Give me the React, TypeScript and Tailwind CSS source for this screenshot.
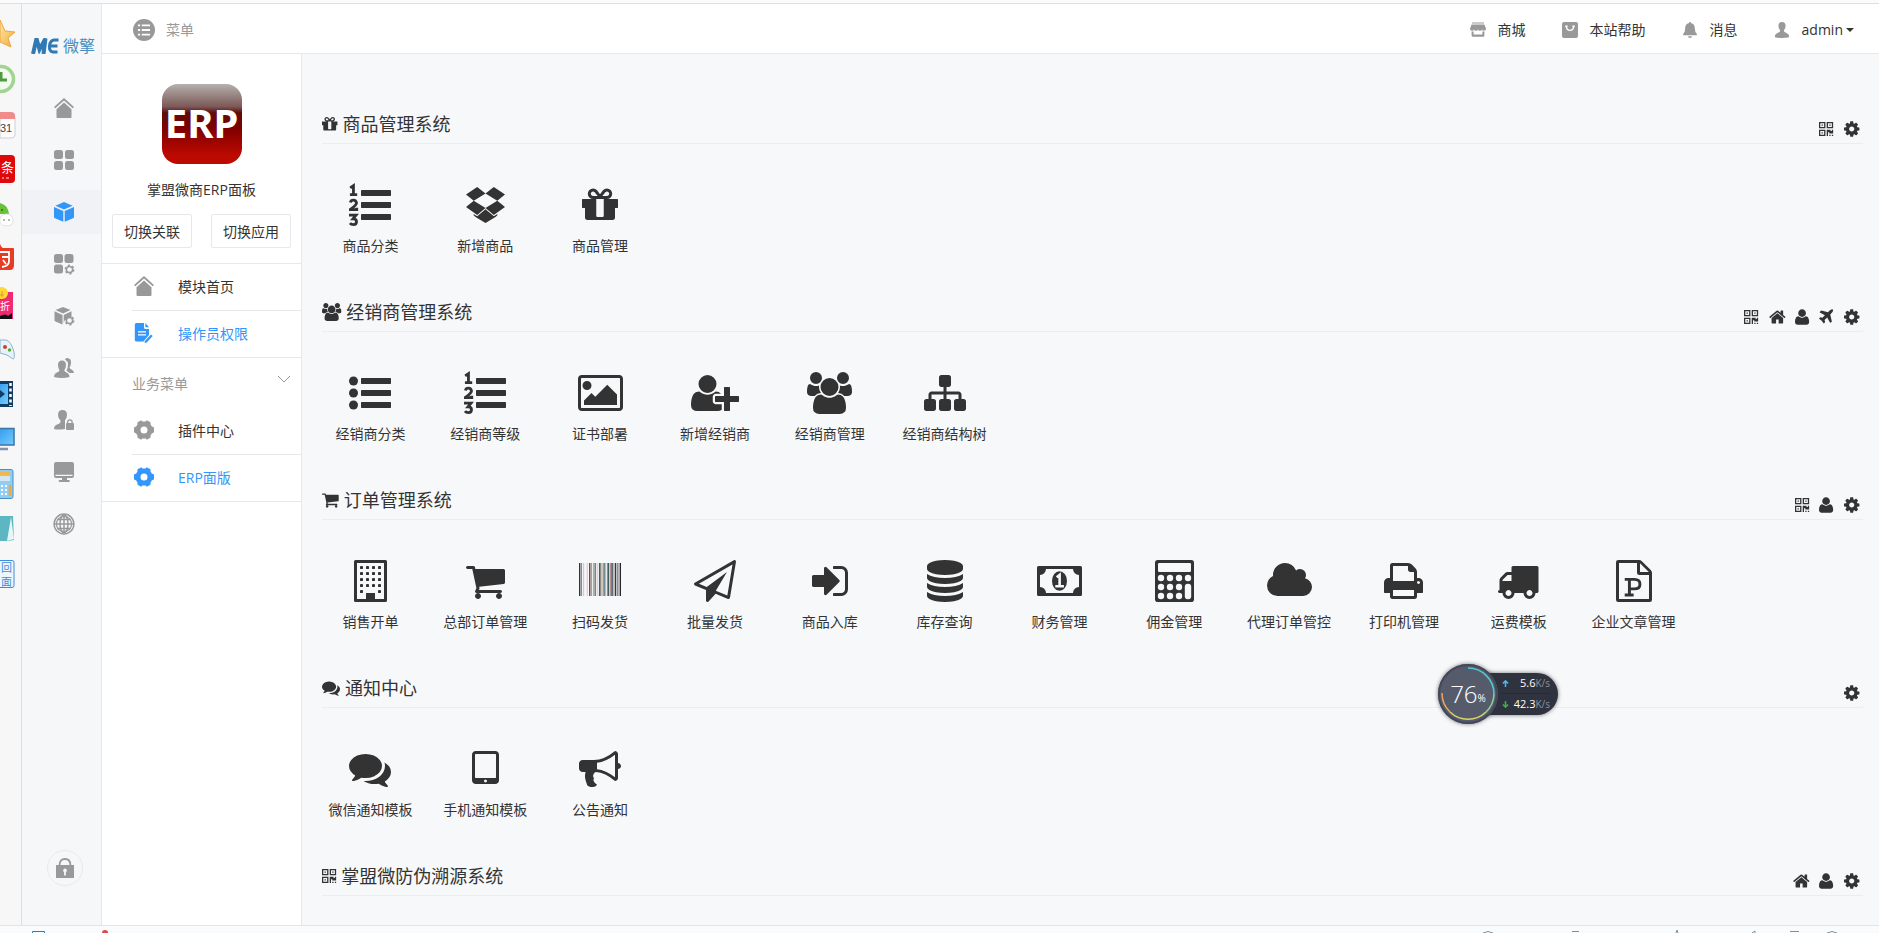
import React from "react";

type Glyph = { x: number; w: number; body: React.ReactNode };

const p = (x: number, w: number, d: string): Glyph => ({ x, w, body: <path d={d} /> });

const bars = (
  <path d="M544 256h1216q32 0 32 32v192q0 32-32 32h-1216q-32 0-32-32v-192q0-32 32-32zM544 768h1216q32 0 32 32v192q0 32-32 32h-1216q-32 0-32-32v-192q0-32 32-32zM544 1280h1216q32 0 32 32v192q0 32-32 32h-1216q-32 0-32-32v-192q0-32 32-32z" />
);

const windowCells: [number, number][] = [];
for (let r = 0; r < 5; r++) {
  for (let c = 0; c < 4; c++) {
    if (r < 4 || c === 0 || c === 3) windowCells.push([448 + c * 256, 256 + r * 256]);
  }
}

const calcKeys: [number, number][] = [];
for (let r = 0; r < 3; r++) {
  for (let c = 0; c < 4; c++) {
    if (r === 0 || c < 3) calcKeys.push([320 + c * 384, 768 + r * 384]);
  }
}

const stripes: [number, number, string][] = [
  [0, 60, "#33313a"], [90, 40, "#7d7a86"], [180, 40, "#b9c0c8"], [330, 40, "#dcb9cf"], [430, 60, "#6d3b3b"],
  [510, 50, "#99a69c"], [620, 40, "#54604d"], [680, 50, "#a07a5d"], [780, 40, "#c5cdd2"], [860, 60, "#3a3a3a"],
  [950, 60, "#c4ad93"], [1040, 60, "#4a7078"], [1120, 40, "#a3a3c2"], [1210, 70, "#3f6060"], [1310, 40, "#8c5c5c"],
  [1380, 60, "#333f4c"], [1460, 50, "#b7a58f"], [1530, 60, "#2f3748"], [1620, 50, "#8c8ca6"], [1690, 40, "#746a72"],
  [1750, 42, "#222222"],
];

const G: Record<string, Glyph> = {
  gear: p(128, 1536, "M1152 896q0-106-75-181t-181-75-181 75-75 181 75 181 181 75 181-75 75-181zm512-109v222q0 12-8 23t-20 13l-185 28q-19 54-39 91 35 50 107 138 10 12 10 25t-9 23q-27 37-99 108t-94 71q-12 0-26-9l-138-108q-44 23-91 38-16 136-29 186-7 28-36 28h-222q-14 0-24.5-8.5t-11.5-21.5l-28-184q-49-16-90-37l-141 107q-10 9-25 9-14 0-25-11-126-114-165-168-7-10-7-23 0-12 8-23 15-21 51-66.5t54-70.5q-27-50-41-99l-183-27q-13-2-21-12.5t-8-23.5v-222q0-12 8-23t19-13l186-28q14-46 39-92-40-57-107-138-10-12-10-24 0-10 9-23 26-36 98.5-107.5t94.5-71.5q13 0 26 10l138 107q44-23 91-38 16-136 29-186 7-28 36-28h222q14 0 24.5 8.5t11.5 21.5l28 184q49 16 90 37l142-107q9-9 24-9 13 0 25 10 129 119 165 170 7 8 7 22 0 12-8 23-15 21-51 66.5t-54 70.5q26 50 41 98l183 28q13 2 21 12.5t8 23.5z"),
  home: p(64, 1664, "M1472 992v480q0 26-19 45t-45 19h-384v-384h-256v384h-384q-26 0-45-19t-19-45v-480q0-1 .5-3t.5-3l575-474 575 474q1 2 1 6zm223-69l-62 74q-8 9-21 11h-3q-13 0-21-7l-692-577-692 577q-12 8-24 7-13-2-21-11l-62-74q-8-10-7-23.5t11-21.5l719-599q32-26 76-26t76 26l244 204v-195q0-14 9-23t23-9h192q14 0 23 9t9 23v408l219 182q10 8 11 21.5t-7 23.5z"),
  user: p(192, 1408, "M1600 1405q0 120-73 189.5t-194 69.5h-874q-121 0-194-69.5t-73-189.5q0-53 3.5-103.5t14-109 26.5-108.5 43-97.5 62-81 85.5-53.5 111.5-20q9 0 42 21.5t74.5 48 108 48 133.5 21.5 133.5-21.5 108-48 74.5-48 42-21.5q61 0 111.5 20t85.5 53.5 62 81 43 97.5 26.5 108.5 14 109 3.5 103.5zm-320-893q0 159-112.5 271.5t-271.5 112.5-271.5-112.5-112.5-271.5 112.5-271.5 271.5-112.5 271.5 112.5 112.5 271.5z"),
  plane: p(192, 1408, "M1568 160q44 52 12 148t-108 172l-161 161 160 696q5 19-12 33l-128 96q-7 6-19 6-4 0-7-1-15-3-21-16l-279-508-259 259 53 194q5 17-8 31l-96 96q-9 9-23 9h-2q-15-2-24-13l-189-252-252-189q-11-7-13-23-1-13 9-25l96-97q9-9 23-9 6 0 8 1l194 53 259-259-508-279q-14-8-17-24-2-16 9-27l128-128q14-13 30-8l665 159 160-160q76-76 172-108t148 12z"),
  cart: p(64, 1664, "M704 1536q0 52-38 90t-90 38-90-38-38-90 38-90 90-38 90 38 38 90zm896 0q0 52-38 90t-90 38-90-38-38-90 38-90 90-38 90 38 38 90zm128-1088v512q0 24-16.5 42.5t-40.5 21.5l-1044 122q13 60 13 70 0 16-24 64h920q26 0 45 19t19 45-19 45-45 19h-1024q-26 0-45-19t-19-45q0-11 8-31.5t16-36 21.5-40 15.5-29.5l-177-823h-204q-26 0-45-19t-19-45 19-45 45-19h256q16 0 28.5 6.5t19.5 15.5 13 24.5 8 26 5.5 29.5 4.5 26h1201q26 0 45 19t19 45z"),
  gift: p(128, 1536, "M1056 1356v-716h-320v716q0 25 18 38.5t46 13.5h192q28 0 46-13.5t18-38.5zm-456-844h195l-126-161q-26-31-69-31-40 0-68 28t-28 68 28 68 68 28zm688-96q0-40-28-68t-68-28q-43 0-69 31l-125 161h194q40 0 68-28t28-68zm376 256v320q0 14-9 23t-23 9h-96v416q0 40-28 68t-68 28h-1088q-40 0-68-28t-28-68v-416h-96q-14 0-23-9t-9-23v-320q0-14 9-23t23-9h440q-93 0-158.5-65.5t-65.5-158.5 65.5-158.5 158.5-65.5q107 0 168 77l128 165 128-165q61-77 168-77 93 0 158.5 65.5t65.5 158.5-65.5 158.5-158.5 65.5h440q14 0 23 9t9 23z"),
  users: p(0, 1920, "M593 896q-162 5-265 128h-134q-82 0-138-40.5t-56-118.5q0-353 124-353 6 0 43.5 21t97.5 42.5 119 21.5q67 0 133-23-5 37-5 66 0 139 81 256zm1071 637q0 120-73 189.5t-194 69.5h-874q-121 0-194-69.5t-73-189.5q0-53 3.5-103.5t14-109 26.5-108.5 43-97.5 62-81 85.5-53.5 111.5-20q10 0 43 21.5t73 48 107 48 135 21.5 135-21.5 107-48 73-48 43-21.5q61 0 111.5 20t85.5 53.5 62 81 43 97.5 26.5 108.5 14 109 3.5 103.5zm-1024-1277q0 106-75 181t-181 75-181-75-75-181 75-181 181-75 181 75 75 181zm704 384q0 159-112.5 271.5t-271.5 112.5-271.5-112.5-112.5-271.5 112.5-271.5 271.5-112.5 271.5 112.5 112.5 271.5zm576 225q0 78-56 118.5t-138 40.5h-134q-103-123-265-128 81-117 81-256 0-29-5-66 66 23 133 23 59 0 119-21.5t97.5-42.5 43.5-21q124 0 124 353zm-128-609q0 106-75 181t-181 75-181-75-75-181 75-181 181-75 181 75 75 181z"),
  comments: p(0, 1792, "M1408 768q0 139-94 257t-256.5 186.5-353.5 68.5q-86 0-176-16-124 88-278 128-36 9-86 16h-3q-11 0-20.5-8t-11.5-21q-1-3-1-6.5t.5-6.5 2-6l2.5-5 3.5-5.5 4-5 4.5-5 4-4.5q5-6 23-25t26-29.5 22.5-29 25-38.5 20.5-44q-124-72-195-177t-71-224q0-139 94-257t256.5-186.5 353.5-68.5 353.5 68.5 256.5 186.5 94 257zm384 256q0 120-71 224.5t-195 176.5q10 24 20.5 44t25 38.5 22.5 29 26 29.5 23 25q1 1 4 4.5t4.5 5 4 5 3.5 5.5l2.5 5 2 6 .5 6.5-1 6.5q-3 14-13 22t-22 7q-50-7-86-16-154-40-278-128-90 16-176 16-271 0-472-132 58 4 88 4 161 0 309-45t264-129q125-92 192-212t67-254q0-77-23-152 129 71 204 178t75 230z"),
  userPlus: p(0, 2048, "M704 896q-159 0-271.5-112.5t-112.5-271.5 112.5-271.5 271.5-112.5 271.5 112.5 112.5 271.5-112.5 271.5-271.5 112.5zm960 128h352q13 0 22.5 9.5t9.5 22.5v192q0 13-9.5 22.5t-22.5 9.5h-352v352q0 13-9.5 22.5t-22.5 9.5h-192q-13 0-22.5-9.5t-9.5-22.5v-352h-352q-13 0-22.5-9.5t-9.5-22.5v-192q0-13 9.5-22.5t22.5-9.5h352v-352q0-13 9.5-22.5t22.5-9.5h192q13 0 22.5 9.5t9.5 22.5v352zm-736 224q0 52 38 90t90 38h256v238q-68 50-171 50h-874q-121 0-194-69t-73-190q0-53 3.5-103.5t14-109 26.5-108.5 43-97.5 62-81 85.5-53.5 111.5-20q19 0 39 17 79 61 154.5 91.5t164.5 30.5 164.5-30.5 154.5-91.5q20-17 39-17 132 0 217 96h-223q-52 0-90 38t-38 90v192z"),
  sitemap: p(0, 1792, "M1792 1248v320q0 40-28 68t-68 28h-320q-40 0-68-28t-28-68v-320q0-40 28-68t68-28h96v-192h-512v192h96q40 0 68 28t28 68v320q0 40-28 68t-68 28h-320q-40 0-68-28t-28-68v-320q0-40 28-68t68-28h96v-192h-512v192h96q40 0 68 28t28 68v320q0 40-28 68t-68 28h-320q-40 0-68-28t-28-68v-320q0-40 28-68t68-28h96v-192q0-52 38-90t90-38h512v-192h-96q-40 0-68-28t-28-68v-320q0-40 28-68t68-28h320q40 0 68 28t28 68v320q0 40-28 68t-68 28h-96v192h512q52 0 90 38t38 90v192h96q40 0 68 28t28 68z"),
  database: p(128, 1536, "M896 768q237 0 443-43t325-127v170q0 69-103 128t-280 93.5-385 34.5-385-34.5-280-93.5-103-128v-170q119 84 325 127t443 43zm0 768q237 0 443-43t325-127v170q0 69-103 128t-280 93.5-385 34.5-385-34.5-280-93.5-103-128v-170q119 84 325 127t443 43zm0-384q237 0 443-43t325-127v170q0 69-103 128t-280 93.5-385 34.5-385-34.5-280-93.5-103-128v-170q119 84 325 127t443 43zm0-1152q208 0 385 34.5t280 93.5 103 128v128q0 69-103 128t-280 93.5-385 34.5-385-34.5-280-93.5-103-128v-128q0-69 103-128t280-93.5 385-34.5z"),
  truck: p(64, 1728, "M640 1408q0-52-38-90t-90-38-90 38-38 90 38 90 90 38 90-38 38-90zm-384-512h384v-256h-158q-13 0-22 9l-195 195q-9 9-9 22v30zm1280 512q0-52-38-90t-90-38-90 38-38 90 38 90 90 38 90-38 38-90zm256-1088v1024q0 15-4 26.5t-13.5 18.5-16.5 11.5-23.5 6-22.5 2-25.5 0-22.5-.5q0 106-75 181t-181 75-181-75-75-181h-384q0 106-75 181t-181 75-181-75-75-181h-64q-3 0-22.5.5t-25.5 0-22.5-2-23.5-6-16.5-11.5-13.5-18.5-4-26.5q0-26 19-45t45-19v-320q0-8-.5-35t0-38 2.5-34.5 6.5-37 14-30.5 22.5-30l198-198q19-19 50.5-32t58.5-13h160v-192q0-26 19-45t45-19h1024q26 0 45 19t19 45z"),
  cloud: p(0, 1920, "M1920 1152q0 159-112.5 271.5t-271.5 112.5h-1088q-185 0-316.5-131.5t-131.5-316.5q0-132 71-241.5t187-163.5q-2-28-2-43 0-212 150-362t362-150q158 0 286.5 88t187.5 230q70-62 166-62 106 0 181 75t75 181q0 75-41 138 129 30 213 134.5t84 239.5z"),
  print: p(64, 1664, "M448 1536h896v-256h-896v256zm0-640h896v-384h-160q-40 0-68-28t-28-68v-160h-640v640zm1152 64q0-26-19-45t-45-19-45 19-19 45 19 45 45 19 45-19 19-45zm128 0v416q0 13-9.5 22.5t-22.5 9.5h-224v160q0 40-28 68t-68 28h-960q-40 0-68-28t-28-68v-160h-224q-13 0-22.5-9.5t-9.5-22.5v-416q0-79 56.5-135.5t135.5-56.5h64v-544q0-40 28-68t68-28h672q40 0 88 20t76 48l152 152q28 28 48 76t20 88v256h64q79 0 135.5 56.5t56.5 135.5z"),
  signIn: p(128, 1536, "M1312 896q0 26-19 45l-544 544q-19 19-45 19t-45-19-19-45v-288h-448q-26 0-45-19t-19-45v-384q0-26 19-45t45-19h448v-288q0-26 19-45t45-19 45 19l544 544q19 19 19 45zm352-352v704q0 119-84.5 203.5t-203.5 84.5h-320q-13 0-22.5-9.5t-9.5-22.5q0-4-1-20t-.5-26.5 3-23.5 10-19.5 20.5-6.5h320q66 0 113-47t47-113v-704q0-66-47-113t-113-47h-312l-11.5-1-11.5-3-8-5.5-7-9-2-13.5q0-4-1-20t-.5-26.5 3-23.5 10-19.5 20.5-6.5h320q119 0 203.5 84.5t84.5 203.5z"),
  paperPlane: p(0, 1792, "M1764 11q33 24 27 64l-256 1536q-5 29-32 45-14 8-31 8-11 0-24-5l-527-215-298 327q-18 21-47 21-14 0-23-4-19-7-30-23.5t-11-36.5v-452l-472-193q-37-14-40-55-3-39 32-59l1664-960q35-21 68 2zm-342 1499l221-1323-1434 827 336 137 863-639-478 797z"),
  tablet: p(320, 1152, "M960 1408q0-26-19-45t-45-19-45 19-19 45 19 45 45 19 45-19 19-45zm384-160v-960q0-13-9.5-22.5t-22.5-9.5h-832q-13 0-22.5 9.5t-9.5 22.5v960q0 13 9.5 22.5t22.5 9.5h832q13 0 22.5-9.5t9.5-22.5zm128-960v1088q0 66-47 113t-113 47h-832q-66 0-113-47t-47-113v-1088q0-66 47-113t113-47h832q66 0 113 47t47 113z"),
  bullhorn: p(0, 1792, "M1664 640q53 0 90.5 37.5t37.5 90.5-37.5 90.5-90.5 37.5v384q0 52-38 90t-90 38q-417-347-812-380-58 19-91 66t-31 100.5 40 92.5q-20 33-23 65.5t6 58 33.5 55 48 50 61.5 50.5q-29 58-111.5 83t-168.5 11.5-132-55.5q-7-23-29.5-87.5t-32-94.5-23-89-15-101 3.5-98.5 22-110.5h-122q-66 0-113-47t-47-113v-192q0-66 47-113t113-47h480q435 0 896-384 52 0 90 38t38 90v384zm-128 604v-954q-394 302-768 343v270q377 42 768 341z"),
  picture: p(0, 1920, "M576 576q0 80-56 136t-136 56-136-56-56-136 56-136 136-56 136 56 56 136zm1088 384v448h-1408v-192l320-320 160 160 512-512zm96-704h-1600q-13 0-22.5 9.5t-9.5 22.5v1216q0 13 9.5 22.5t22.5 9.5h1600q13 0 22.5-9.5t9.5-22.5v-1216q0-13-9.5-22.5t-22.5-9.5zm160 32v1216q0 66-47 113t-113 47h-1600q-66 0-113-47t-47-113v-1216q0-66 47-113t113-47h1600q66 0 113 47t47 113z"),
  dropbox: p(64, 1664, "M542 128L64 450l330 262 502-312zM1250 128L1728 450l-330 262-502-312zM64 980l330-268 502 312-354 298zM1728 980l-330-268-502 312 354 298zM896 1080l356 296 150-98v50q-60 60-150 120l-356 216-356-216q-90-60-150-120v-50l150 98z"),
  qrcode: p(192, 1408, "M192 192h640v640h-640zM320 320v384h384v-384zM448 448h128v128h-128zM960 192v640h640v-640zM1088 320h384v384h-384zM1216 448h128v128h-128zM192 960v640h640v-640zM320 1088h384v384h-384zM448 1216h128v128h-128zM960 960h384v128h128v-128h128v384h-384v-128h-128v384h-128zM1216 1472h128v128h-128zM1472 1472h128v128h-128z"),
  listUl: {
    x: 0,
    w: 1792,
    body: (
      <>
        <circle cx="192" cy="384" r="192" />
        <circle cx="192" cy="896" r="192" />
        <circle cx="192" cy="1408" r="192" />
        {bars}
      </>
    ),
  },
  listOl: {
    x: 0,
    w: 1792,
    body: (
      <>
        {bars}
        <g fill="none" stroke="currentColor" strokeWidth="120">
          <path d="M50 165L190 70V450M40 450H350" />
          <path d="M60 790Q80 690 190 690T320 810Q320 900 60 1080V1096H330V1010" />
          <path d="M60 1385V1330H300L170 1490Q320 1490 320 1610T190 1736Q90 1736 40 1670" />
        </g>
      </>
    ),
  },
  building: {
    x: 192,
    w: 1408,
    body: (
      <>
        <path fillRule="evenodd" d="M256 0H1536Q1600 0 1600 64V1728Q1600 1792 1536 1792H256Q192 1792 192 1728V64Q192 0 256 0ZM320 128V1664H704V1440Q704 1408 736 1408H1056Q1088 1408 1088 1440V1664H1472V128Z" />
        {windowCells.map(([x, y]) => (
          <rect key={`${x}-${y}`} x={x} y={y} width="128" height="128" rx="20" />
        ))}
        <rect x="704" y="1408" width="384" height="300" rx="30" />
      </>
    ),
  },
  barcode: {
    x: 0,
    w: 1792,
    body: stripes.map(([x, w, c]) => <rect key={x} x={x} y="128" width={w} height="1408" fill={c} />),
  },
  money: {
    x: 0,
    w: 1920,
    body: (
      <>
        <path fillRule="evenodd" d="M64 256H1856Q1920 256 1920 320V1472Q1920 1536 1856 1536H64Q0 1536 0 1472V320Q0 256 64 256ZM384 384Q384 490 309 565T128 640V1152Q234 1152 309 1227T384 1408H1536Q1536 1302 1611 1227T1792 1152V640Q1686 640 1611 565T1536 384Z" />
        <ellipse cx="960" cy="896" rx="320" ry="416" />
        <path d="M840 740L965 640V1110M780 1120H1150" fill="none" stroke="#f7f8fa" strokeWidth="110" />
      </>
    ),
  },
  calculator: {
    x: 64,
    w: 1664,
    body: (
      <>
        <rect x="64" y="0" width="1664" height="1792" rx="120" />
        <g fill="#f7f8fa">
          <rect x="192" y="128" width="1408" height="384" rx="50" />
          {calcKeys.map(([x, y]) => (
            <circle key={`${x}-${y}`} cx={x} cy={y} r="136" />
          ))}
          <rect x="1336" y="1016" width="272" height="656" rx="130" />
        </g>
      </>
    ),
  },
  fileP: {
    x: 128,
    w: 1536,
    body: (
      <>
        <path fillRule="evenodd" d="M224 0H1120Q1180 0 1230 50L1600 420Q1664 480 1664 540V1696Q1664 1792 1568 1792H224Q128 1792 128 1696V96Q128 0 224 0ZM256 128V1664H1536V640H1120Q1024 640 1024 544V128ZM1152 136V512H1528Z" />
        <path d="M500 828H910Q1150 828 1150 1030T910 1232H700M700 828V1490M500 1490H880" fill="none" stroke="currentColor" strokeWidth="124" />
      </>
    ),
  },
};

function Fa({ name, className }: { name: string; className: string }) {
  const g = G[name];
  return (
    <svg viewBox={`${g.x} 0 ${g.w} 1792`} fill="currentColor" fillRule={name === "qrcode" ? "evenodd" : undefined} className={`${className} w-auto shrink-0 overflow-visible`} aria-hidden="true">
      {g.body}
    </svg>
  );
}

/* 20x20 icons used by the navigation */
const NAV: Record<string, React.ReactNode> = {
  home: <path d="M10 0L20 9l-1.300 1.300L10 2.400 1.300 10.300 0 9ZM10 4.500l7.500 6.800V19q0 1-1 1h-13q-1 0-1-1v-7.700Z" />,
  apps: (
    <>
      <rect width="9" height="9" rx="2.500" /><rect x="11" width="9" height="9" rx="2.500" />
      <rect y="11" width="9" height="9" rx="2.500" /><rect x="11" y="11" width="9" height="9" rx="2.500" />
    </>
  ),
  cube: <path d="M10 0l8.600 3.700L10 7.500 1.400 3.700ZM0 5l9.300 4v10.700L1 16.200q-1-.5-1-1.500ZM20 5l-9.300 4v10.700l8.300-3.500q1-.5 1-1.500Z" />,
  appsGear: (
    <>
      <rect width="9" height="9" rx="2.500" /><rect x="10.500" width="9" height="9" rx="2.500" />
      <rect y="10.500" width="9" height="9" rx="2.500" />
      <circle cx="15.500" cy="15.500" r="3.100" fill="none" stroke="currentColor" strokeWidth="1.500" />
      <circle cx="15.500" cy="15.500" r="4.300" fill="none" stroke="currentColor" strokeWidth="1.300" strokeDasharray="2.250 2.250" />
    </>
  ),
  cubeGear: (
    <>
      <path d="M9 1l7.500 3L9 7.500 1.500 4ZM.500 5.200L8.500 9v9.500l-7-3q-1-.5-1-1.500ZM17.500 5.200L9.700 9v8.500q.8-6 7.800-6.500Z" />
      <circle cx="15.500" cy="14.500" r="3.100" fill="none" stroke="currentColor" strokeWidth="1.500" />
      <circle cx="15.500" cy="14.500" r="4.300" fill="none" stroke="currentColor" strokeWidth="1.300" strokeDasharray="2.250 2.250" />
    </>
  ),
  people: (
    <>
      <path d="M11 1.500Q12-.2 14 .2q3.500.6 3 5-.2 2.500-1.500 4 0 1.300 2 2.300 2.500 1.200 2.500 3.500h-4.500q-1.500-1.500-3-2.200 1.500-3 1.500-6.500 0-3-3-4.800Z" />
      <path d="M8 2.500q4 0 4 4.500 0 3-1.700 5 0 1.600 2.200 2.500 3 1.300 3 4.500Q12 20 8 20T0 19q0-3.200 3-4.500 2.500-.9 2.500-2.500Q4 10 4 7q0-4.500 4-4.500Z" />
    </>
  ),
  personLock: (
    <>
      <path d="M8.500 0Q13 0 13 5q0 3-2 5.200v1.300q0 .5 0 1V19Q4 20 0 19q0-3.500 3-4.500 3.500-1 3.500-3v-1Q4 8.500 4 5q0-5 4.500-5Z" />
      <rect x="12" y="13" width="8" height="7" rx="1" />
      <path d="M13.700 13.500v-1.500q0-2.200 2.200-2.200t2.200 2.200v1.500" fill="none" stroke="currentColor" strokeWidth="1.300" />
    </>
  ),
  screen: <path fillRule="evenodd" d="M2 0H18q2 0 2 2V14q0 2-2 2H13v2h2q.8 0 .8.900T15 20H5.500q-.8 0-.8-1t.8-1H8v-2H2q-2 0-2-2V2Q0 0 2 0ZM1.500 12.800V14H18.500V12.800Z" />,
  globe: (
    <g fill="none" stroke="currentColor" strokeWidth="1.500">
      <circle cx="10" cy="10" r="9.900" /><circle cx="10" cy="10" r="7.600" strokeWidth="1.200" />
      <ellipse cx="10" cy="10" rx="4" ry="9" /><path d="M10 1V19M1 10H19M3 5.500H17M3 14.500H17" />
    </g>
  ),
  doc: (
    <>
      <path fillRule="evenodd" d="M2.500 0H10V4.500q0 1.500 1.500 1.500H15V12L9.500 18.500H2.500Q.8 18.500.8 17V1.500Q.8 0 2.500 0ZM4 8.300V9.600H12V8.300ZM4 11.300V12.600H12V11.300Z" />
      <path d="M11.300 0L15 4.200H12q-.7 0-.7-.7ZM17 11.500l1.700 1.500-6 6.500-2.200.5.400-2Z" />
    </>
  ),
  cog: <path fillRule="evenodd" d="M6.300.8Q8 .2 8.300 1.600h3.400Q12 .2 13.700.8L16 2q1.300.8.400 2.200 1 1.300 1.500 2.600 2.100-.1 2.100 1.400v3.600q0 1.500-2.100 1.400-.5 1.300-1.500 2.600.9 1.400-.4 2.200l-2.300 1.200q-1.700.6-2-.8H8.300q-.3 1.400-2 .8L4 18q-1.300-.8-.4-2.200-1-1.300-1.500-2.600Q0 13.300 0 11.800V8.200q0-1.500 2.100-1.400.5-1.300 1.500-2.600Q2.700 2.800 4 2ZM10 6.500a3.500 3.500 0 100 7 3.500 3.500 0 000-7Z" />,
  menu: (
    <>
      <circle cx="10" cy="10" r="10" />
      <path d="M4.500 5.800H6.500M4.500 10H6.500M4.500 14.200H6.500M8 5.800H15.500M8 10H15.500M8 14.200H15.500" stroke="#fff" strokeWidth="1.600" />
    </>
  ),
  shop: <path d="M2.500.500H17.500V2H2.500ZM2 3H18L20 8q0 3-2.500 3T15 9q0 2-2.500 2T10 9q0 2-2.500 2T5 9q0 2-2.500 2T0 8ZM2 12H4.500V15.500H15.500V12H18V17q0 1.500-1.500 1.500H3.500Q2 18.500 2 17Z" />,
  bag: (
    <>
      <rect width="20" height="20" rx="2.500" />
      <path d="M5.500 5q0 5.500 4.500 5.500T14.500 5M4 5.200H7M13 5.200H16" stroke="#fff" strokeWidth="1.800" fill="none" />
    </>
  ),
  bell: <path d="M10 0q1.500 0 1.500 1.700 4.500 1 4.500 6 0 5 2.500 7V16.500H1.500V14.700q2.500-2 2.500-7 0-5 4.500-6Q8.500 0 10 0ZM7.500 17.800H12.500Q12.500 20 10 20T7.500 17.800Z" />,
  person: <path d="M10 0q4.500 0 4.500 5 0 3-2 5.200v1.500q0 1 3 2 3.500 1.300 3.500 5.300-9 2-18 0 0-4 3.500-5.300 3-1 3-2v-1.500Q5.500 8 5.500 5q0-5 4.500-5Z" />,
  lock: (
    <>
      <path d="M4.500 7.500Q4.500 1 10 1t5.500 6.500" fill="none" stroke="currentColor" strokeWidth="1.800" />
      <path fillRule="evenodd" d="M1 7H19V20H1ZM10 10.500a2 2 0 00-.9 3.700V17.500h1.800V14.200A2 2 0 0010 10.500Z" />
    </>
  ),
};

function Nav({ name, className }: { name: string; className: string }) {
  return (
    <svg viewBox="0 0 20 20" fill="currentColor" className={`shrink-0 overflow-visible ${className}`} aria-hidden="true">
      {NAV[name]}
    </svg>
  );
}

type Section = { title: string; icon: string; tools: string[]; items: [string, string][] };

const sections: Section[] = [
  { title: "商品管理系统", icon: "gift", tools: ["qrcode", "gear"], items: [["listOl", "商品分类"], ["dropbox", "新增商品"], ["gift", "商品管理"]] },
  {
    title: "经销商管理系统", icon: "users", tools: ["qrcode", "home", "user", "plane", "gear"],
    items: [["listUl", "经销商分类"], ["listOl", "经销商等级"], ["picture", "证书部暑"], ["userPlus", "新增经销商"], ["users", "经销商管理"], ["sitemap", "经销商结构树"]],
  },
  {
    title: "订单管理系统", icon: "cart", tools: ["qrcode", "user", "gear"],
    items: [["building", "销售开单"], ["cart", "总部订单管理"], ["barcode", "扫码发货"], ["paperPlane", "批量发货"], ["signIn", "商品入库"], ["database", "库存查询"], ["money", "财务管理"], ["calculator", "佣金管理"], ["cloud", "代理订单管控"], ["print", "打印机管理"], ["truck", "运费模板"], ["fileP", "企业文章管理"]],
  },
  { title: "通知中心", icon: "comments", tools: ["gear"], items: [["comments", "微信通知模板"], ["tablet", "手机通知模板"], ["bullhorn", "公告通知"]] },
  { title: "掌盟微防伪溯源系统", icon: "qrcode", tools: ["home", "user", "gear"], items: [] },
];

const toolNames: Record<string, string> = { qrcode: "二维码", home: "首页", user: "用户", plane: "发送", gear: "设置" };

function SectionBlock({ s }: { s: Section }) {
  return (
    <section>
      <header className="flex h-8 items-center justify-between border-b border-[#ebedf0] pr-1">
        <h2 className="flex items-center gap-[5px] self-start text-[18px] leading-6">
          <Fa name={s.icon} className="h-[18px]" />
          {s.title}
        </h2>
        <div className="flex items-center gap-[10px] pt-[2px]">
          {s.tools.map((t) => (
            <button key={t} aria-label={toolNames[t]}>
              <Fa name={t} className="block h-[18px]" />
            </button>
          ))}
        </div>
      </header>
      {s.items.length > 0 && (
        <div className="-ml-[9px] grid max-w-[1378px] grid-cols-12 pt-10 pb-11">
          {s.items.map(([icon, label]) => (
            <a key={label} href="#" className="flex flex-col items-center gap-[10px] leading-5 whitespace-nowrap">
              <Fa name={icon} className="h-[42px]" />
              {label}
            </a>
          ))}
        </div>
      )}
    </section>
  );
}

/* Desktop shortcuts that peek out from under the window's left edge */
function Shortcuts() {
  return (
    <svg viewBox="0 0 16 600" className="mt-3 h-[600px] w-4" aria-hidden="true">
      <defs>
        <linearGradient id="st" x1="0" y1="0" x2="1" y2="1"><stop offset="0" stopColor="#ffe9a8" /><stop offset="1" stopColor="#f3a93a" /></linearGradient>
        <linearGradient id="bl" x1="0" y1="0" x2="1" y2="1"><stop offset="0" stopColor="#2f97ea" /><stop offset="1" stopColor="#74ccff" /></linearGradient>
      </defs>
      <path d="M0 4L5 15 15 16 8 22 11 31 0 26Z" fill="url(#st)" stroke="#eea63c" strokeWidth="1" />
      <circle cx="1" cy="63" r="12.500" fill="#f2fbef" stroke="#a3d391" strokeWidth="3.500" />
      <path d="M1 56v8h6" fill="none" stroke="#4f9c40" strokeWidth="3" />
      <path d="M0 97h11q4 0 4 4v18q0 3-4 3H0Z" fill="#fdfdfd" stroke="#cfcfcf" />
      <path d="M0 96h11q4 0 4 4v3H0Z" fill="#f08c8c" />
      <text x="0" y="116" fontSize="11" fill="#444" fontFamily="Liberation Sans, sans-serif">31</text>
      <path d="M0 139h11q4 0 4 4v20q0 4-4 4H0Z" fill="#e00808" />
      <text x="1" y="156" fontSize="13" fill="#fff" fontFamily="Noto Sans CJK SC, sans-serif">条</text>
      <path d="M2 162h2M6 162h3" stroke="#ff9c9c" strokeWidth="1.500" />
      <path d="M0 187q8 2 9 11H0Z" fill="#67c23a" /><circle cx="2" cy="194" r="1" fill="#2f6e16" />
      <path d="M0 202q2-4 6-4 7 0 7 7 0 5-7 5-4 0-6-3Z" fill="#fff" stroke="#e2e2e2" /><path d="M4 203v2M9 203v2" stroke="#777" />
      <g transform="translate(0 -4)">
        <path d="M0 232q1 3 3 4h10q1 0 1 1v16q0 5-4 5H0Z" fill="#e93a24" />
        <path d="M0 240h9v5H2M9 245v4q0 5-7 6M3 248l3 4" fill="none" stroke="#fff" strokeWidth="1.800" />
        <rect x="-4" y="280" width="17" height="27" fill="#ef2a72" /><circle cx="2" cy="281" r="6" fill="#ffd83a" /><path d="M0 283h4M2 279v6" stroke="#e69a18" />
        <text x="0" y="298" fontSize="10" fill="#fff" fontFamily="Noto Sans CJK SC, sans-serif">折</text>
        <path d="M0 304q6-3 8 0l4-3v6H0Z" fill="#111" />
        <path d="M0 328h6q5 1 8 12 1 7-1 7l-6-4-7-2Z" fill="#e7f1f8" stroke="#8fb3cc" /><circle cx="5" cy="335" r="2" fill="#d23c30" /><circle cx="9.500" cy="338" r="1.700" fill="#52ad3d" />
        <rect x="-4" y="369" width="17" height="26" fill="#123d63" /><rect x="-4" y="372" width="12" height="20" fill="url(#bl)" /><path d="M10.500 371v23" stroke="#fff" strokeWidth="2.500" strokeDasharray="3 2.500" /><path d="M0 378l5 4-5 4Z" fill="#123d63" />
        <rect x="-4" y="416.500" width="18" height="16.500" fill="url(#bl)" stroke="#3b75a8" strokeWidth="1.500" /><path d="M0 437h8" stroke="#8294ad" strokeWidth="2.500" />
        <rect x="-4" y="457.500" width="17" height="29" rx="2" fill="#8fcdf3" stroke="#4b8ec4" /><rect x="-2" y="460" width="12" height="3" fill="#f2b84c" /><path d="M0 464h10v5H0Z" fill="#d6e6f0" />
        <path d="M1 474h2M5 474h2M1 478h2M5 478h2M1 482h2M5 482h2" stroke="#fff" strokeWidth="2" /><path d="M10 473v11" stroke="#f2a73c" strokeWidth="2.500" />
        <path d="M0 504h13l1 24-6 1H0Z" fill="#5cb7c2" /><path d="M11 505l3 22-7 2Z" fill="#e6f6f8" />
        <rect x="-4" y="548.500" width="18" height="27" rx="2" fill="#eef6fd" stroke="#3d8ed8" />
        <text x="1" y="560" fontSize="11" fill="#3d8ed8" fontFamily="Noto Sans CJK SC, sans-serif">回</text>
        <text x="1" y="574" fontSize="11" fill="#3d8ed8" fontFamily="Noto Sans CJK SC, sans-serif">面</text>
      </g>
    </svg>
  );
}

function MenuRow({ icon, label, active = false }: { icon: string; label: string; active?: boolean }) {
  return (
    <a href="#" className={`flex h-[46px] items-center gap-6 pb-[2px] pl-8 ${active ? "text-[#3296fa]" : ""}`}>
      <Nav name={icon} className={active ? "h-5 w-5" : "h-5 w-5 text-[#999]"} />
      {label}
    </a>
  );
}

const sideNav = ["home", "apps", "cube", "appsGear", "cubeGear", "people", "personLock", "screen", "globe"];
const sideLabels = ["首页", "平台", "应用", "平台管理", "应用管理", "用户", "权限", "系统", "站点"];

export default function App() {
  return (
    <div className="relative flex h-screen flex-col overflow-hidden bg-[#fafbfc] pt-[3px] text-[14px] text-[#333] [font-family:'Open_Sans','Noto_Sans_CJK_SC',sans-serif]">
      <div className="flex min-h-0 flex-1 border-t border-[#dfdfdf]">
        <div className="w-[22px] shrink-0 border-r border-[#dedfe0] bg-[#f7f7f7]">
          <Shortcuts />
        </div>

        <nav className="flex w-20 shrink-0 flex-col items-center border-r border-[#e7e8eb] bg-[#f5f7f9]">
          <a href="#" className="mt-7 ml-[3px] flex h-7 items-center gap-1 text-[16px] text-[#4a8dbe]">
            <svg viewBox="0 0 56 32" className="h-4 w-7" fill="none" stroke="#2f79b5" aria-hidden="true">
              <path d="M4 32L11 1l6 22L29 1l-4 31" strokeWidth="8" />
              <path d="M55 4H46q-8 1-9 12t7 12h9M38 16h15" strokeWidth="6" />
            </svg>
            <span>微擎</span>
          </a>
          <div className="mt-[26px] flex w-full flex-col gap-2">
            {sideNav.map((n, i) => (
              <a
                key={n}
                href="#"
                aria-label={sideLabels[i]}
                className={`flex h-11 items-center justify-center pl-1 ${n === "cube" ? "bg-[#f0f2f5] text-[#3296fa]" : "text-[#999]"}`}
              >
                <Nav name={n} className="h-5 w-5" />
              </a>
            ))}
          </div>
          <button aria-label="锁定" className="mt-auto mb-[39px] ml-[6px] flex h-9 w-9 items-center justify-center rounded-full border border-[#e9eaec] text-[#999]">
            <Nav name="lock" className="h-5 w-5" />
          </button>
        </nav>

        <div className="flex min-w-0 flex-1 flex-col">
          <header className="flex h-[50px] shrink-0 items-center justify-between border-b border-[#e7e8eb] bg-white pt-[2px] pr-[25px] pl-[31px]">
            <button className="flex items-center gap-[11px] text-[#999]">
              <Nav name="menu" className="h-[22px] w-[22px]" />
              菜单
            </button>
            <div className="flex items-center gap-9">
              <a href="#" className="flex items-center gap-3"><Nav name="shop" className="h-4 w-4 text-[#999]" />商城</a>
              <a href="#" className="flex items-center gap-3"><Nav name="bag" className="h-4 w-4 text-[#999]" />本站帮助</a>
              <a href="#" className="flex items-center gap-3"><Nav name="bell" className="h-4 w-4 text-[#999]" />消息</a>
              <button className="flex items-center gap-3">
                <Nav name="person" className="h-4 w-4 text-[#999]" />
                <span className="flex items-center gap-[3px]">
                  admin
                  <svg viewBox="0 0 8 4" className="h-1 w-2" aria-hidden="true"><path d="M0 0H8L4 4Z" fill="#333" /></svg>
                </span>
              </button>
            </div>
          </header>

          <div className="flex min-h-0 flex-1">
            <aside className="w-[200px] shrink-0 border-r border-[#e7e8eb] bg-white">
              <div className="flex flex-col items-center border-b border-[#e7e8eb] px-[10px] pt-[30px] pb-[15px]">
                <div className="flex h-20 w-20 items-center justify-center rounded-2xl bg-[linear-gradient(180deg,#b4b1af_0%,#7d5a58_28%,#5e0c0c_36%,#7e0000_55%,#bd0a00_90%)] pb-[2px] text-[40px] font-bold text-white [font-family:'Noto_Sans','Open_Sans',sans-serif]">
                  ERP
                </div>
                <div className="mt-4 leading-5">掌盟微商ERP面板</div>
                <div className="mt-[14px] flex w-full justify-between">
                  <button className="h-[34px] w-20 rounded-xs border border-[#e7e8eb]">切换关联</button>
                  <button className="h-[34px] w-20 rounded-xs border border-[#e7e8eb]">切换应用</button>
                </div>
              </div>
              <div className="border-b border-[#e7e8eb]">
                <MenuRow icon="home" label="模块首页" />
                <div className="ml-[30px] border-t border-[#e7e8eb]" />
                <MenuRow icon="doc" label="操作员权限" active />
              </div>
              <button className="flex h-[50px] w-full items-center justify-between pr-[10px] pl-[30px] text-[#999]">
                业务菜单
                <svg viewBox="0 0 14 8" className="mb-2 h-2 w-[14px]" fill="none" stroke="#999" aria-hidden="true"><path d="M1 1l6 6 6-6" /></svg>
              </button>
              <div className="border-b border-[#e7e8eb]">
                <MenuRow icon="cog" label="插件中心" />
                <div className="ml-[30px] border-t border-[#e7e8eb]" />
                <MenuRow icon="cog" label="ERP面版" active />
              </div>
            </aside>

            <main className="min-w-0 flex-1 overflow-hidden bg-[#f7f8fa] pt-[58px] pr-4 pl-5">
              {sections.map((s) => (
                <SectionBlock key={s.title} s={s} />
              ))}
            </main>
          </div>
        </div>
      </div>

      {/* Status strip at the foot of the window */}
      <footer className="flex h-2 shrink-0 items-end justify-between overflow-hidden border-t border-[#e2e4e6] bg-[#fafbfc] pr-9 pl-8">
        <svg viewBox="0 0 90 7" className="h-[7px] w-[90px]" aria-hidden="true">
          <path d="M.500 7V5.500H12.500V7" fill="none" stroke="#2584b5" /><circle cx="73" cy="7" r="3" fill="#e0474c" />
        </svg>
        <svg viewBox="0 0 360 7" className="h-[7px] w-[360px]" fill="none" stroke="#888d94" aria-hidden="true">
          <path d="M0 7q5-3 10 0M89 5.500h7M193 7l1-3 1 3M269 7l3-2v2M307 5.500h9M344 7q5-3 10 0" />
        </svg>
      </footer>

      {/* Floating speed meter */}
      <div className="absolute top-[664px] right-[321px] flex items-center">
        <div className="z-10 -mr-6 flex h-[60px] w-[60px] items-center justify-center rounded-full bg-[#565b6b] shadow-[0_0_4px_#333a]">
          <svg viewBox="0 0 60 60" className="absolute top-0 left-0 h-[60px] w-[60px]" fill="none" strokeWidth="1.500" aria-hidden="true">
            <circle cx="30" cy="30" r="29" stroke="#444959" strokeWidth="2" />
            <path d="M30 4A26 26 0 0156 30" stroke="#4ecad0" />
            <path d="M56 30A26 26 0 0148 48" stroke="#8bd3a0" />
            <path d="M48 48A26 26 0 0112 48" stroke="#d9d56a" />
            <path d="M12 48A26 26 0 014 29" stroke="#eca55c" />
          </svg>
          <span className="text-[24px] font-light text-white">76</span>
          <span className="mt-2 text-[10px] text-white">%</span>
        </div>
        <div className="flex h-[42px] w-[84px] flex-col justify-center rounded-r-full bg-[#2f3340] pr-2 pl-7 text-[11px] text-white shadow-[0_0_4px_#333a]">
          <div className="flex h-[21px] items-center justify-between border-b border-[#262a35]">
            <svg viewBox="0 0 8 8" className="h-[7px] w-[7px] shrink-0" fill="none" stroke="#4fb4ec" strokeWidth="1.800" aria-hidden="true"><path d="M4 8V1M1 4l3-3 3 3" /></svg>
            <span className="font-medium">5.6<span className="text-[10px] font-normal text-[#8d919c]">K/s</span></span>
          </div>
          <div className="flex h-[21px] items-center justify-between">
            <svg viewBox="0 0 8 8" className="h-[7px] w-[7px] shrink-0" fill="none" stroke="#3fae49" strokeWidth="1.800" aria-hidden="true"><path d="M4 0V7M1 4l3 3 3-3" /></svg>
            <span className="font-medium">42.3<span className="text-[10px] font-normal text-[#8d919c]">K/s</span></span>
          </div>
        </div>
      </div>
    </div>
  );
}
